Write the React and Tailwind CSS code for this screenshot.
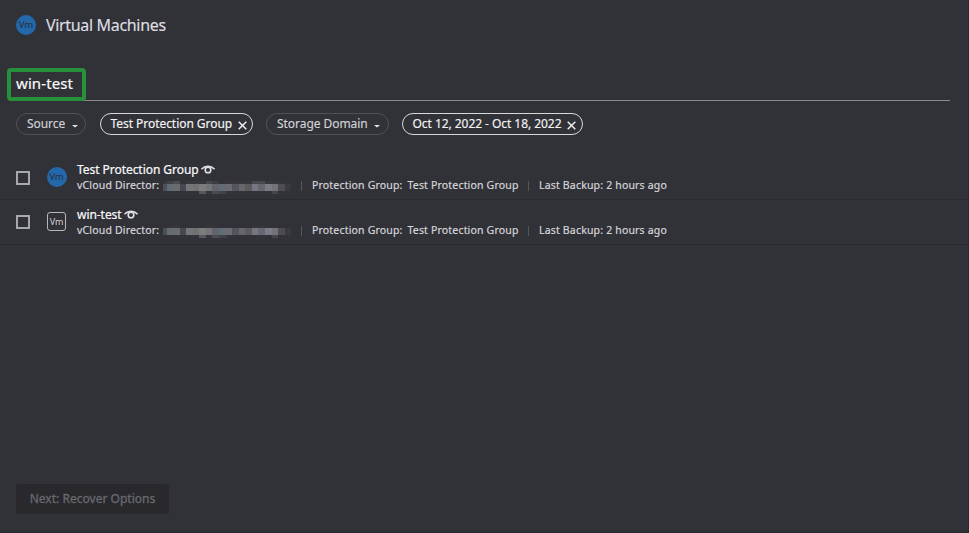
import React from 'react';

const TOP = ['#35353c', '#414148', '#4b4b52', '#323239', '#36363d', '#37373e', '#35353b', '#47474e', '#3c3c43', '#323239', '#35353b', '#35353b', '#34343b', '#36363d', '#47484f', '#494950', '#36363d', '#36363d', '#33333a', '#323239'];
const MID = ['#505054', '#5f6c73', '#6b6a6d', '#454752', '#757478', '#717073', '#7b7c7c', '#74757a', '#63636b', '#606c76', '#6c6b70', '#52555f', '#66666b', '#5d5a5e', '#747681', '#666871', '#7a7b83', '#727379', '#4f4b50', '#39393f'];
const LOW = ['#323239', '#323239', '#323239', '#323239', '#323239', '#323239', '#57575d', '#36363d', '#4b4b54', '#42424b', '#34343b', '#323239', '#323239', '#323239', '#323239', '#34343b', '#323239', '#45454e', '#323239', '#323239'];

function Redacted({ faint }) {
  return (
    <span className={`ml-[4px] block h-[13px] w-[129px] shrink-0 ${faint ? 'mt-0' : 'mt-[3px]'}`}>
      {[TOP, MID, LOW].map((row, r) => (
        <span key={r} className={`flex ${r === 1 ? 'h-[7px]' : 'h-[3px]'} ${r === 0 && faint ? 'opacity-20' : ''}`}>
          {row.map((c, i) => (
            <i key={i} className={i === 0 ? 'w-[3.5px] shrink-0' : 'w-[6.57px] shrink-0'} style={{ backgroundColor: c }} />
          ))}
        </span>
      ))}
    </span>
  );
}

function Eye() {
  return (
    <svg className="ml-[2.5px] h-[10px] w-[14px]" viewBox="0 0 14 10" fill="none" stroke="#e0e0e3">
      <path d="M.4 4.200C2.200 2.200 4.300 1.300 7 1.300s4.800.9 6.600 2.900" strokeWidth="1.600" />
      <circle cx="7" cy="4.900" r="2.800" strokeWidth="1.600" />
    </svg>
  );
}

function VmCircle() {
  return (
    <span className="flex h-5 w-5 items-center justify-center rounded-full bg-[#2468ac] text-[9.500px] text-[#25334a] [-webkit-text-stroke:0.15px]">Vm</span>
  );
}

function Pill({ label, active, className }) {
  return (
    <div className={`flex h-[22px] items-center rounded-full border ${active ? 'border-[#d8d8da] pl-[9.500px] text-[#f4f4f5]' : 'border-[#505057] pl-[10px] text-[#d2d2d5]'} ${className}`}>
      <span>{label}</span>
      {active ? (
        <svg className="mt-[3px] ml-[5.500px] h-[9px] w-[9px]" viewBox="0 0 9 9" stroke="#f4f4f5" strokeWidth="1.400">
          <path d="M.7.7l7.600 7.600M8.300.7L.7 8.300" />
        </svg>
      ) : (
        <svg className="mt-[4px] ml-[6.500px] h-[3px] w-[6px]" viewBox="0 0 6 3" fill="#e4e4e6">
          <path d="M0 0h6L3 2.600z" />
        </svg>
      )}
    </div>
  );
}

function Row({ name, group, faint }) {
  return (
    <div className="flex h-[45px] border-b border-[#2a2a30]">
      <span className={`ml-4 h-[14px] w-[14px] border-2 border-[#a8a8ab] ${group ? 'mt-[16px]' : 'mt-[15px]'}`} />
      <div className="mt-[12px] ml-4 flex w-[21px] justify-center">
        {group ? (
          <VmCircle />
        ) : (
          <span className="flex h-[19px] w-[19px] items-center justify-center rounded-[3px] border border-[#b8b8bb] pt-px text-[9px] text-[#d0d0d3]">Vm</span>
        )}
      </div>
      <div className="mt-[7px] ml-[10px]">
        <div className="flex h-4 items-center text-[12px] tracking-[-0.05px] text-[#fafafa] [-webkit-text-stroke:0.2px]">
          {name}
          <Eye />
        </div>
        <div className="flex h-4 items-center text-[10.500px] tracking-[0.180px] whitespace-nowrap text-[#d5d5d8] [-webkit-text-stroke:0.2px]">
          <span className="w-[82px]">vCloud Director:</span>
          <Redacted faint={faint} />
          <span className="ml-[9px] h-[10px] w-px bg-[#55555b]" />
          <span className="ml-[10px] w-[95.500px]">Protection Group:</span>
          <span className="w-[111px]">Test Protection Group</span>
          <span className="ml-[9.500px] h-[10px] w-px bg-[#55555b]" />
          <span className="ml-[10px]">Last Backup: 2 hours ago</span>
        </div>
      </div>
    </div>
  );
}

export default function App() {
  return (
    <main className="flex h-[533px] w-[969px] flex-col overflow-hidden border-r border-b border-[#29292f] bg-[#313138] font-['Noto_Sans',sans-serif]">
      <header className="flex h-[50px] items-center pl-4">
        <VmCircle />
        <h1 className="-mt-px ml-[10px] text-[16px] tracking-[-0.33px] text-[#dedee1] [-webkit-text-stroke:0.15px]">Virtual Machines</h1>
      </header>
      <div className="mt-[18px] ml-4 flex h-[33px] w-[934px] border-b border-[#8a8a8d]">
        <div className="-ml-[9px] flex h-[33px] w-[79px] shrink-0 items-center rounded-[4px] border-[4px] border-[#26913a] pb-[2px] pl-[5px] text-[15px] tracking-[0.1px] text-[#fafafa] [-webkit-text-stroke:0.2px]">win-test</div>
      </div>
      <div className="mt-3 flex pl-4 text-[12px] tracking-[-0.05px] whitespace-nowrap [-webkit-text-stroke:0.15px]">
        <Pill label="Source" className="w-[70px]" />
        <Pill label="Test Protection Group" active className="ml-[14px] w-[153px]" />
        <Pill label="Storage Domain" className="ml-[13px] w-[123px]" />
        <Pill label="Oct 12, 2022 - Oct 18, 2022" active className="ml-[13px] w-[181px]" />
      </div>
      <section className="mt-[20px]">
        <Row name="Test Protection Group" group />
        <Row name="win-test" faint />
      </section>
      <button className="mt-auto mb-[18px] ml-4 h-[30px] w-[153px] rounded-[3px] bg-[#28282d] text-[12px] tracking-[0.02px] text-[#69696e] [-webkit-text-stroke:0.3px]">Next: Recover Options</button>
    </main>
  );
}
